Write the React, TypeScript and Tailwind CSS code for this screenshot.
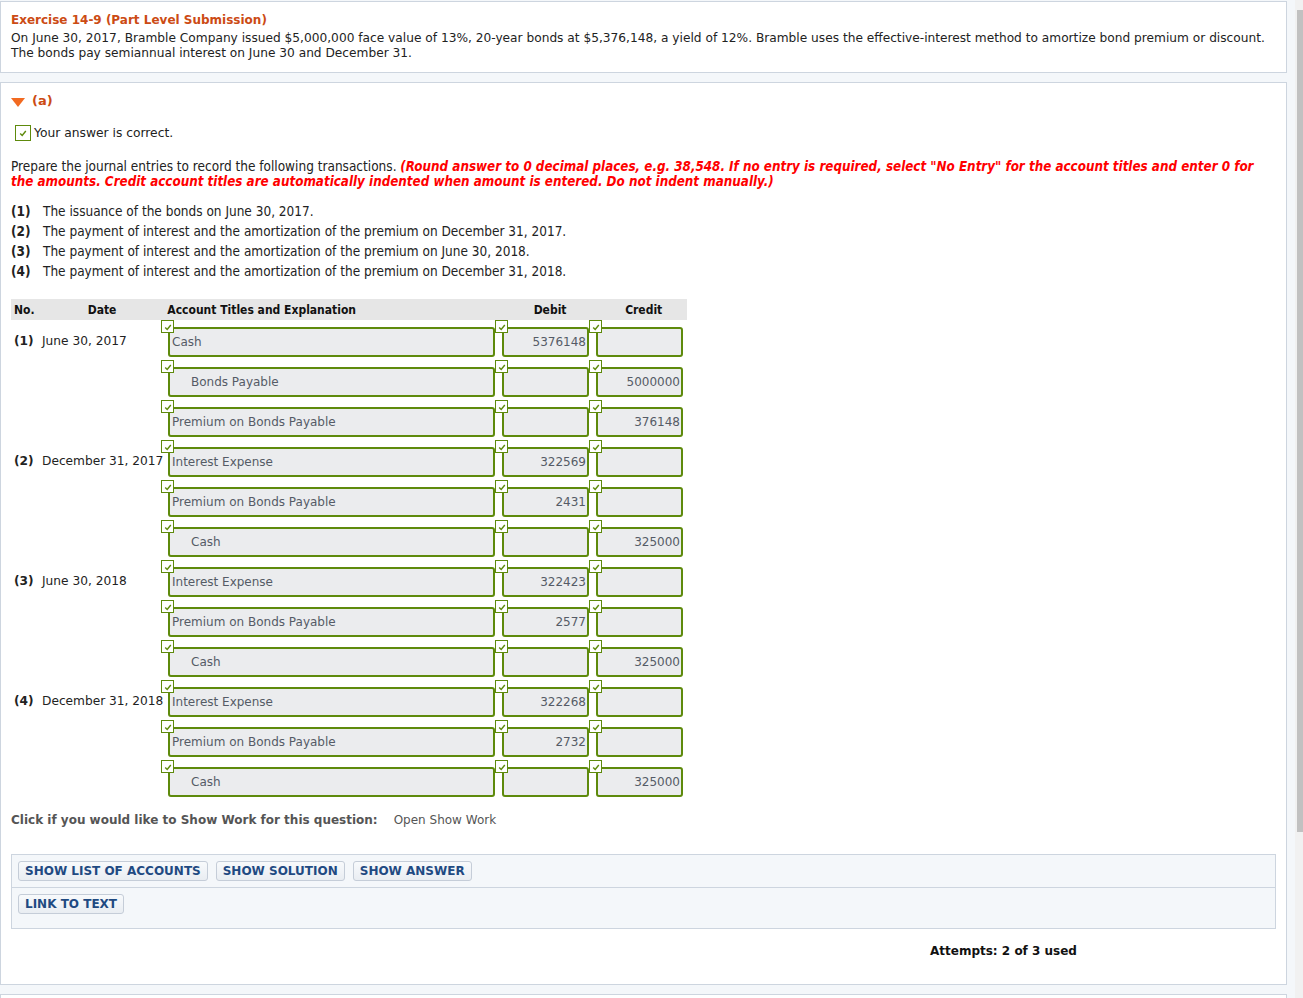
import React from "react";

const verdana = "font-['DejaVu_Sans',Verdana,sans-serif]";
const tahoma = "font-['DejaVu_Sans_Condensed','DejaVu_Sans',sans-serif] [font-stretch:condensed]";

type Line = { account: string; indent?: boolean; debit?: string; credit?: string };
type Entry = { no: string; date: string; lines: Line[] };

const entries: Entry[] = [
  {
    no: "(1)",
    date: "June 30, 2017",
    lines: [
      { account: "Cash", debit: "5376148" },
      { account: "Bonds Payable", indent: true, credit: "5000000" },
      { account: "Premium on Bonds Payable", credit: "376148" },
    ],
  },
  {
    no: "(2)",
    date: "December 31, 2017",
    lines: [
      { account: "Interest Expense", debit: "322569" },
      { account: "Premium on Bonds Payable", debit: "2431" },
      { account: "Cash", indent: true, credit: "325000" },
    ],
  },
  {
    no: "(3)",
    date: "June 30, 2018",
    lines: [
      { account: "Interest Expense", debit: "322423" },
      { account: "Premium on Bonds Payable", debit: "2577" },
      { account: "Cash", indent: true, credit: "325000" },
    ],
  },
  {
    no: "(4)",
    date: "December 31, 2018",
    lines: [
      { account: "Interest Expense", debit: "322268" },
      { account: "Premium on Bonds Payable", debit: "2732" },
      { account: "Cash", indent: true, credit: "325000" },
    ],
  },
];

function Check({ className = "" }: { className?: string }) {
  return (
    <span
      className={`flex items-center justify-center bg-white border border-[#5e8a0c] ${className}`}
    >
      <svg viewBox="0 0 10 10" className="w-[8px] h-[8px]">
        <polyline points="1.5,5.5 4,8 8.5,2.5" fill="none" stroke="#5e8a0c" strokeWidth="1.8" />
      </svg>
    </span>
  );
}

function Field({ value, right, indent, width }: { value?: string; right?: boolean; indent?: boolean; width: string }) {
  return (
    <div className={`relative pt-[7px] pl-[7px] ${width}`}>
      <Check className="absolute left-0 top-0 w-[13px] h-[13px] z-10" />
      <div
        className={`h-[30px] border-2 border-[#5e8a0c] rounded-[3px] bg-[#ebecee] flex items-center text-[12px] text-[#555b66] ${verdana} ${
          right ? "justify-end pr-[1px]" : indent ? "pl-[21px]" : "pl-[2px]"
        }`}
      >
        {value}
      </div>
    </div>
  );
}

const btn =
  "px-[6px] h-[20px] flex items-center border border-[#c5cdd8] rounded-[3px] bg-gradient-to-b from-[#f8fafc] to-[#e9edf2] text-[12px] font-bold text-[#1f4a82]";

export default function App() {
  return (
    <div className={`flex w-[1303px] h-[998px] overflow-hidden bg-[#f4f7fa] ${verdana}`}>
      <div className="flex-1 pr-[8px] pt-[1px] flex flex-col gap-[9px]">
        {/* header panel */}
        <section className="shrink-0 bg-white border border-[#cdd5df] h-[72px] px-[10px] pt-[10px]">
          <h1 className="text-[12px] font-bold text-[#cc4b14] leading-[16px]">
            Exercise 14-9 (Part Level Submission)
          </h1>
          <p className="text-[12.2px] text-[#222] leading-[15px] mt-[3px]">
            On June 30, 2017, Bramble Company issued $5,000,000 face value of 13%, 20-year bonds at $5,376,148, a yield
            of 12%. Bramble uses the effective-interest method to amortize bond premium or discount. The bonds pay
            semiannual interest on June 30 and December 31.
          </p>
        </section>

        {/* part (a) */}
        <section className="shrink-0 bg-white border border-[#cdd5df] h-[903px] px-[10px] pt-[10px]">
          <div className="flex items-center gap-[7px] h-[16px]">
            <svg viewBox="0 0 14 9" className="w-[14px] h-[9px] mt-[2px]">
              <polygon points="0,0 14,0 7,9" fill="#f26a21" />
            </svg>
            <span className="text-[13px] font-bold text-[#cc4b14]">(a)</span>
          </div>

          <div className="flex items-center gap-[3px] mt-[16px] ml-[4px] h-[16px]">
            <Check className="w-[16px] h-[16px]" />
            <span className="text-[12.3px] text-[#222]">Your answer is correct.</span>
          </div>

          <p className={`mt-[18px] text-[13.5px] leading-[15px] text-[#222] ${tahoma}`}>
            Prepare the journal entries to record the following transactions.{" "}
            <span className={`font-bold italic text-[#f00] text-[13.3px] ${tahoma}`}>
              (Round answer to 0 decimal places, e.g. 38,548. If no entry is required, select "No Entry" for the
              account titles and enter 0 for the amounts. Credit account titles are automatically indented when amount
              is entered. Do not indent manually.)
            </span>
          </p>

          <ol className={`mt-[12px] text-[13.5px] leading-[20px] text-[#222] ${tahoma}`}>
            {[
              "The issuance of the bonds on June 30, 2017.",
              "The payment of interest and the amortization of the premium on December 31, 2017.",
              "The payment of interest and the amortization of the premium on June 30, 2018.",
              "The payment of interest and the amortization of the premium on December 31, 2018.",
            ].map((t, i) => (
              <li key={i} className="flex">
                <span className="w-[32px] font-bold">({i + 1})</span>
                <span>{t}</span>
              </li>
            ))}
          </ol>

          {/* journal table */}
          <div className="mt-[18px] w-[676px]">
            <div className={`flex h-[21px] items-center bg-[#e6e6e6] text-[12px] font-bold text-[#111] ${tahoma}`}>
              <span className="w-[77px] pl-[3px]">No.</span>
              <span className="w-[80px]">Date</span>
              <span className="w-[334px]">Account Titles and Explanation</span>
              <span className="w-[94px] pl-[7px] text-center">Debit</span>
              <span className="w-[94px] pl-[7px] text-center">Credit</span>
            </div>
            {entries.map((e) =>
              e.lines.map((l, j) => (
                <div key={e.no + j} className="flex h-[40px]">
                  <div className="w-[150px] pl-[3px] pt-[12px] text-[12.2px] text-[#222] whitespace-nowrap">
                    {j === 0 && (
                      <>
                        <span className="font-bold inline-block w-[28px]">{e.no}</span>
                        {e.date}
                      </>
                    )}
                  </div>
                  <Field width="w-[334px]" value={l.account} indent={l.indent} />
                  <Field width="w-[94px]" value={l.debit} right />
                  <Field width="w-[94px]" value={l.credit} right />
                </div>
              ))
            )}
          </div>

          <div className="mt-[12px] flex items-center text-[12px] h-[16px]">
            <span className="font-bold text-[#555]">Click if you would like to Show Work for this question:</span>
            <span className="ml-[16px] text-[#555]">Open Show Work</span>
          </div>

          <div className="mt-[26px] border border-[#cdd5df] bg-[#f4f7fa] h-[75px]">
            <div className="flex gap-[8px] px-[6px] h-[33px] items-center border-b border-[#cdd5df]">
              <span className={btn}>SHOW LIST OF ACCOUNTS</span>
              <span className={btn}>SHOW SOLUTION</span>
              <span className={btn}>SHOW ANSWER</span>
            </div>
            <div className="flex px-[6px] h-[32px] items-center">
              <span className={btn}>LINK TO TEXT</span>
            </div>
          </div>

          <div className="mt-[13px] pl-[919px] text-[12px] font-bold text-[#111]">Attempts: 2 of 3 used</div>
        </section>

        <section className="shrink-0 bg-white border border-[#cdd5df] h-[40px]" />
      </div>

      {/* scrollbar */}
      <div className="w-[8px] bg-[#f1f1f1] flex flex-col items-end">
        <div className="h-[10px]" />
        <div className="w-[6px] h-[822px] bg-[#c1c1c1]" />
      </div>
    </div>
  );
}
